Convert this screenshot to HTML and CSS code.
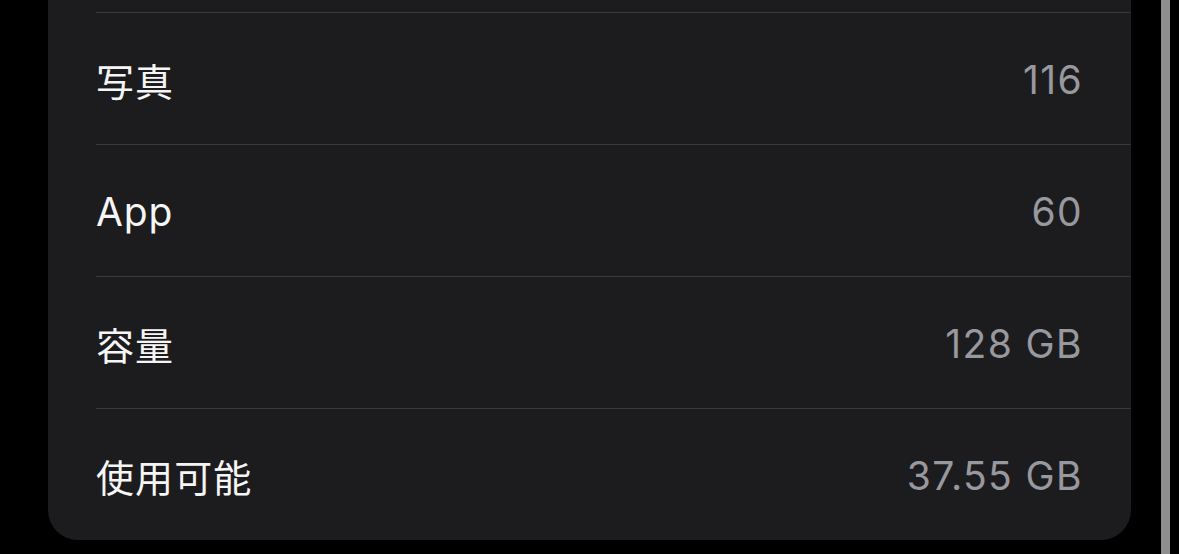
FILE: index.html
```html
<!DOCTYPE html>
<html lang="ja">
<head>
<meta charset="utf-8">
<link rel="stylesheet" href="styles.css">
</head>
<body>
<div class="screen">
  <div class="card">
    <div class="stub"></div>
    <div class="list">
      <div class="row"><span class="label cjk">写真</span><span class="value">116</span></div>
      <div class="row"><span class="label">App</span><span class="value">60</span></div>
      <div class="row"><span class="label cjk">容量</span><span class="value">128 GB</span></div>
      <div class="row"><span class="label cjk">使用可能</span><span class="value">37.55 GB</span></div>
    </div>
  </div>
  <div class="scrollbar"></div>
</div>
</body>
</html>
```

FILE: styles.css
```css
html, body {
  margin: 0;
  padding: 0;
  background: #000;
}
body {
  width: 1179px;
  height: 554px;
  overflow: hidden;
  font-family: Inter, "Noto Sans CJK JP", sans-serif;
}
.screen {
  display: flex;
  height: 554px;
  padding-left: 48px;
  box-sizing: border-box;
}
.card {
  width: 1083px;
  height: 540px;
  background: #1c1c1e;
  border-radius: 0 0 30px 30px;
  display: flex;
  flex-direction: column;
}
.stub {
  height: 12px;
}
.list {
  margin-left: 48px;
  display: flex;
  flex-direction: column;
}
.row {
  border-top: 1px solid #3a3a3d;
  display: flex;
  align-items: center;
  justify-content: space-between;
  padding-right: 48px;
  padding-top: 2px;
  height: 129px;
}
.label {
  color: #f5f5f5;
  font-size: 39px;
  letter-spacing: 0.9px;
}
.label.cjk {
  font-size: 38px;
  letter-spacing: 1.1px;
}
.value {
  color: #98989f;
  font-size: 39px;
  letter-spacing: 1.4px;
}
.scrollbar {
  width: 9px;
  height: 554px;
  margin-left: 30px;
  background: #8e8e8e;
}
```
